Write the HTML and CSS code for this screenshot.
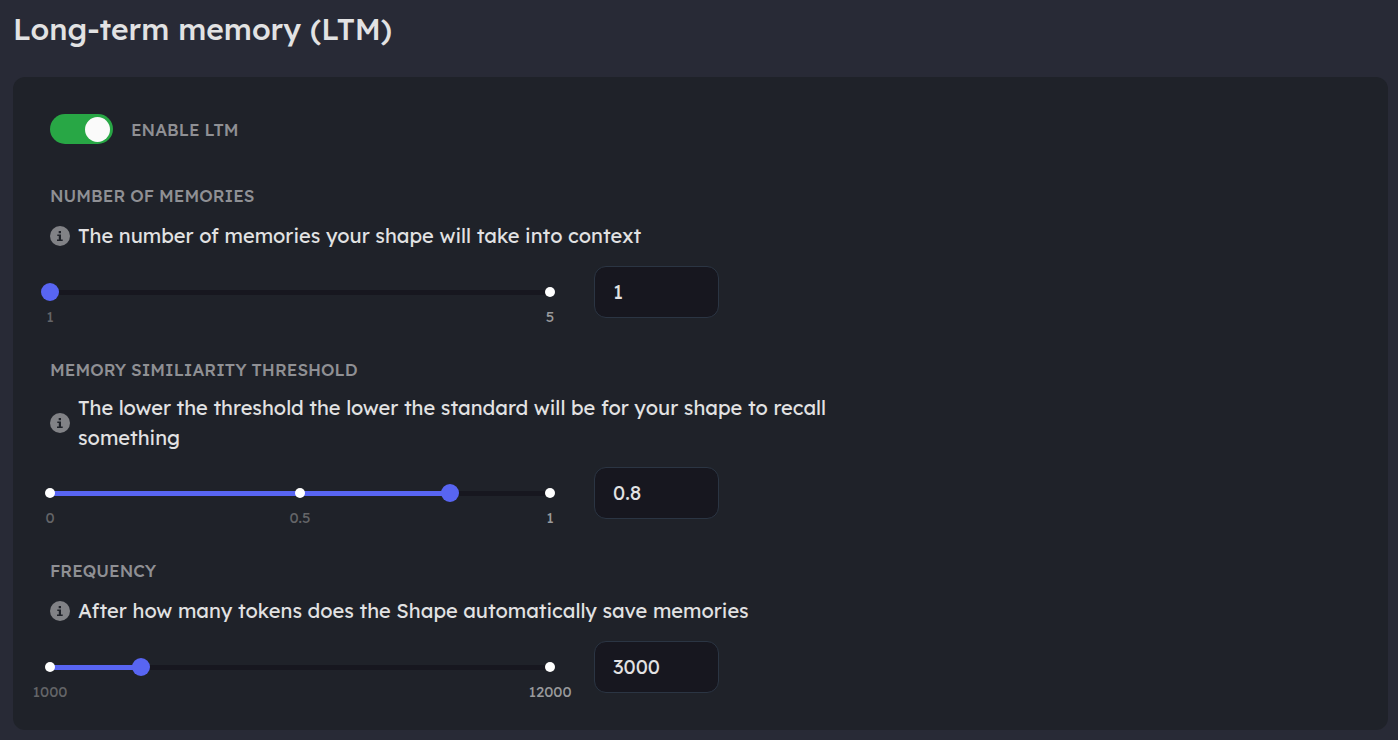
FILE: index.html
```html
<!DOCTYPE html>
<html lang="en">
<head>
<meta charset="utf-8">
<title>Long-term memory (LTM)</title>
<link rel="stylesheet" href="styles.css">
</head>
<body>
<svg class="sprite" aria-hidden="true">
  <symbol id="info" viewBox="0 0 20 20">
    <circle cx="10" cy="10" r="10" fill="#818286"/>
    <path d="M8.700 5h2.300v2.200H8.700zM7.300 8.500h3.700v4.900h1.700v1.600H7v-1.600h1.800v-3.300H7.300z" fill="#1f2229"/>
  </symbol>
</svg>
<main class="page">
  <h1 class="title">Long-term memory (LTM)</h1>
  <form class="panel">
    <div class="toggle-row">
      <input class="toggle" id="enable" type="checkbox" role="switch" checked>
      <label class="label" for="enable">ENABLE LTM</label>
    </div>

    <section class="setting">
      <label class="label" for="count">NUMBER OF MEMORIES</label>
      <p class="hint"><svg class="icon"><use href="#info"/></svg><span>The number of memories your shape will take into context</span></p>
      <div class="controls">
        <div class="slider">
          <div class="rail"><div class="fill" style="width:0%"></div></div>
          <div class="dots"><i></i><i></i></div>
          <input class="range" type="range" min="1" max="5" value="1" aria-label="Number of memories">
          <div class="ticks"><span>1</span><span class="max">5</span></div>
        </div>
        <input class="value" id="count" type="text" inputmode="decimal" value="1">
      </div>
    </section>

    <section class="setting">
      <label class="label" for="threshold">MEMORY SIMILIARITY THRESHOLD</label>
      <p class="hint"><svg class="icon"><use href="#info"/></svg><span>The lower the threshold the lower the standard will be for your shape to recall something</span></p>
      <div class="controls">
        <div class="slider">
          <div class="rail"><div class="fill" style="width:80%"></div></div>
          <div class="dots"><i></i><i></i><i></i></div>
          <input class="range" type="range" min="0" max="1" step="0.1" value="0.8" aria-label="Memory similiarity threshold">
          <div class="ticks"><span>0</span><span>0.5</span><span class="max">1</span></div>
        </div>
        <input class="value" id="threshold" type="text" inputmode="decimal" value="0.8">
      </div>
    </section>

    <section class="setting">
      <label class="label" for="frequency">FREQUENCY</label>
      <p class="hint"><svg class="icon"><use href="#info"/></svg><span>After how many tokens does the Shape automatically save memories</span></p>
      <div class="controls">
        <div class="slider">
          <div class="rail"><div class="fill" style="width:18.18%"></div></div>
          <div class="dots"><i></i><i></i></div>
          <input class="range" type="range" min="1000" max="12000" step="100" value="3000" aria-label="Frequency">
          <div class="ticks"><span>1000</span><span class="max">12000</span></div>
        </div>
        <input class="value" id="frequency" type="text" inputmode="decimal" value="3000">
      </div>
    </section>
  </form>
</main>
</body>
</html>
```

FILE: styles.css
```css
* { box-sizing: border-box; }

body {
  margin: 0;
  background: #282a36;
  color: #e2e2e3;
  font-family: Lexend, Inter, sans-serif;
  font-size: 20px;
  line-height: 30px;
}

.sprite { position: absolute; width: 0; height: 0; }

.page { padding: 11px 10px 10px 13px; }

.title {
  margin: 0 0 30px;
  font-size: 30px;
  font-weight: 500;
  line-height: 36px;
}

.panel {
  display: flex;
  flex-direction: column;
  gap: 37px;
  padding: 37px;
  border-radius: 12px;
  background: #1f2229;
}

.toggle-row { display: flex; align-items: center; gap: 18px; }

.toggle {
  appearance: none;
  display: flex;
  justify-content: flex-end;
  align-items: center;
  width: 63px;
  height: 30px;
  margin: 0;
  padding: 3px;
  border-radius: 15px;
  background: #28a745;
}

.toggle:not(:checked) { justify-content: flex-start; background: #55575f; }

.toggle::before {
  content: "";
  width: 25px;
  height: 25px;
  border-radius: 50%;
  background: #fafafa;
}

.label {
  display: block;
  color: #8f9094;
  font-size: 17px;
  font-weight: 500;
  line-height: 29px;
}

.hint {
  display: flex;
  align-items: center;
  gap: 8px;
  max-width: 800px;
  min-height: 33px;
  margin: 9px 0 14px;
}

.icon { flex: none; width: 20px; height: 20px; }

.controls { display: flex; align-items: center; gap: 44px; }

.slider {
  display: grid;
  grid-template-rows: 18px 20px;
  row-gap: 6px;
  align-items: center;
  width: 500px;
  margin-bottom: -26px;
}

.rail, .dots, .range { grid-area: 1 / 1; }

.rail { height: 5px; background: #17171f; }

.fill { height: 100%; background: #5865f2; }

.dots, .ticks { display: flex; justify-content: space-between; }

.dots i {
  width: 10px;
  height: 10px;
  margin: 0 -5px;
  border-radius: 50%;
  background: #fff;
}

.range {
  appearance: none;
  width: calc(100% + 18px);
  height: 18px;
  margin: 0 -9px;
  background: transparent;
}

.range::-webkit-slider-thumb {
  appearance: none;
  width: 18px;
  height: 18px;
  border-radius: 50%;
  background: #5865f2;
}

.ticks {
  color: #646568;
  font-size: 15px;
  line-height: 20px;
}

.ticks span { display: flex; justify-content: center; width: 0; }

.ticks .max { color: #999a9c; }

.value {
  width: 125px;
  height: 52px;
  padding: 0 18px 2px;
  border: 1px solid #2b3543;
  border-radius: 12px;
  background: #17171f;
  color: #e2e2e3;
  font: inherit;
}
```
